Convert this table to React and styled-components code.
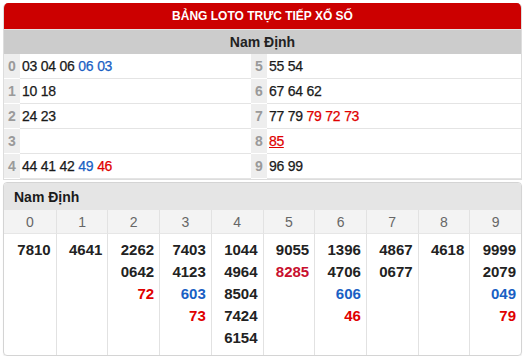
import React from 'react';
import styled, { createGlobalStyle } from 'styled-components';

const Global = createGlobalStyle`
  body {
    margin: 0;
    background: #fff;
    font-family: "Liberation Sans", Arial, sans-serif;
  }
`;

const Page = styled.div`
  padding: 3px 3px 0 3px;
  width: 519px;
`;

const LotoBox = styled.div`
  border: 1px solid #ddd;
  border-top: none;
  border-radius: 5px 5px 0 0;
  overflow: hidden;
`;

const RedTitle = styled.div`
  background: #cc0000;
  color: #fff;
  font-weight: bold;
  font-size: 12px;
  height: 26px;
  display: flex;
  align-items: center;
  justify-content: center;
  border-bottom: 1px solid #e3e3e3;
`;

const GrayTitle = styled.div`
  background: #cccccc;
  color: #222;
  font-weight: bold;
  font-size: 14px;
  height: 24px;
  display: flex;
  align-items: center;
  justify-content: center;
`;

const LotoGrid = styled.div`
  display: grid;
  grid-template-columns: 16px 231px 16px 1fr;
`;

const Head = styled.div`
  background: #eeeeee;
  color: #9a9a9a;
  font-weight: bold;
  font-size: 14px;
  height: 24px;
  display: flex;
  align-items: center;
  justify-content: center;
  border-bottom: 1px solid #fff;
`;

const Tail = styled.div`
  height: 24px;
  display: flex;
  align-items: center;
  padding-left: 2px;
  font-size: 14px;
  letter-spacing: -0.4px;
  color: #1a1a1a;
  -webkit-text-stroke: 0.25px currentColor;
  border-bottom: 1px solid #e4e4e4;
`;

const Num = styled.span`
  margin-right: 4px;
  color: ${(p) => (p.$c === 'b' ? '#1a5fc4' : p.$c === 'r' ? '#e00000' : '#1a1a1a')};
  text-decoration: ${(p) => (p.$u ? 'underline' : 'none')};
`;

const Gap = styled.div`
  height: 2px;
`;

const DetailBox = styled.div`
  border: 1px solid #d4d4d4;
  border-radius: 4px;
  overflow: hidden;
  box-shadow: 0 1px 1px rgba(0, 0, 0, 0.08);
`;

const DetailTitle = styled.div`
  background: #e5e5e5;
  color: #1a1a1a;
  font-weight: bold;
  font-size: 14px;
  height: 27px;
  display: flex;
  align-items: center;
  padding-left: 10px;
`;

const Cols = styled.div`
  display: grid;
  grid-template-columns: repeat(10, 1fr);
`;

const ColHead = styled.div`
  background: #f3f3f3;
  color: #666;
  font-size: 14px;
  height: 23px;
  display: flex;
  align-items: center;
  justify-content: center;
  border-left: ${(p) => (p.$first ? 'none' : '1px solid #e2e2e2')};
  border-bottom: 1px solid #e6e6e6;
`;

const ColBody = styled.div`
  display: flex;
  flex-direction: column;
  align-items: flex-end;
  padding: 5px 5px 6px 0;
  border-left: ${(p) => (p.$first ? 'none' : '1px solid #e2e2e2')};
`;

const Big = styled.div`
  font-weight: bold;
  font-size: 15px;
  line-height: 22px;
  color: ${(p) => (p.$c === 'b' ? '#1a5fc4' : p.$c === 'r' ? '#e00000' : p.$c === 'd' ? '#c8102e' : '#222')};
`;

const loto = [
  [[['03'], ['04'], ['06'], ['06', 'b'], ['03', 'b']], [['55'], ['54']]],
  [[['10'], ['18']], [['67'], ['64'], ['62']]],
  [[['24'], ['23']], [['77'], ['79'], ['79', 'r'], ['72', 'r'], ['73', 'r']]],
  [[], [['85', 'r', true]]],
  [[['44'], ['41'], ['42'], ['49', 'b'], ['46', 'r']], [['96'], ['99']]],
];

const detail = [
  [['7810']],
  [['4641']],
  [['2262'], ['0642'], ['72', 'r']],
  [['7403'], ['4123'], ['603', 'b'], ['73', 'r']],
  [['1044'], ['4964'], ['8504'], ['7424'], ['6154']],
  [['9055'], ['8285', 'd']],
  [['1396'], ['4706'], ['606', 'b'], ['46', 'r']],
  [['4867'], ['0677']],
  [['4618']],
  [['9999'], ['2079'], ['049', 'b'], ['79', 'r']],
];

const Nums = ({ list }) =>
  list.map(([n, c, u], i) => (
    <Num key={i} $c={c} $u={u}>
      {n}
    </Num>
  ));

export default function App() {
  return (
    <Page>
      <Global />
      <LotoBox>
        <RedTitle>BẢNG LOTO TRỰC TIẾP XỔ SỐ</RedTitle>
        <GrayTitle>Nam Định</GrayTitle>
        <LotoGrid>
          {loto.map(([left, right], i) => (
            <React.Fragment key={i}>
              <Head>{i}</Head>
              <Tail>
                <Nums list={left} />
              </Tail>
              <Head>{i + 5}</Head>
              <Tail>
                <Nums list={right} />
              </Tail>
            </React.Fragment>
          ))}
        </LotoGrid>
      </LotoBox>
      <Gap />
      <DetailBox>
        <DetailTitle>Nam Định</DetailTitle>
        <Cols>
          {detail.map((_, i) => (
            <ColHead key={i} $first={i === 0}>
              {i}
            </ColHead>
          ))}
          {detail.map((col, i) => (
            <ColBody key={i} $first={i === 0}>
              {col.map(([n, c], j) => (
                <Big key={j} $c={c}>
                  {n}
                </Big>
              ))}
            </ColBody>
          ))}
        </Cols>
      </DetailBox>
    </Page>
  );
}
